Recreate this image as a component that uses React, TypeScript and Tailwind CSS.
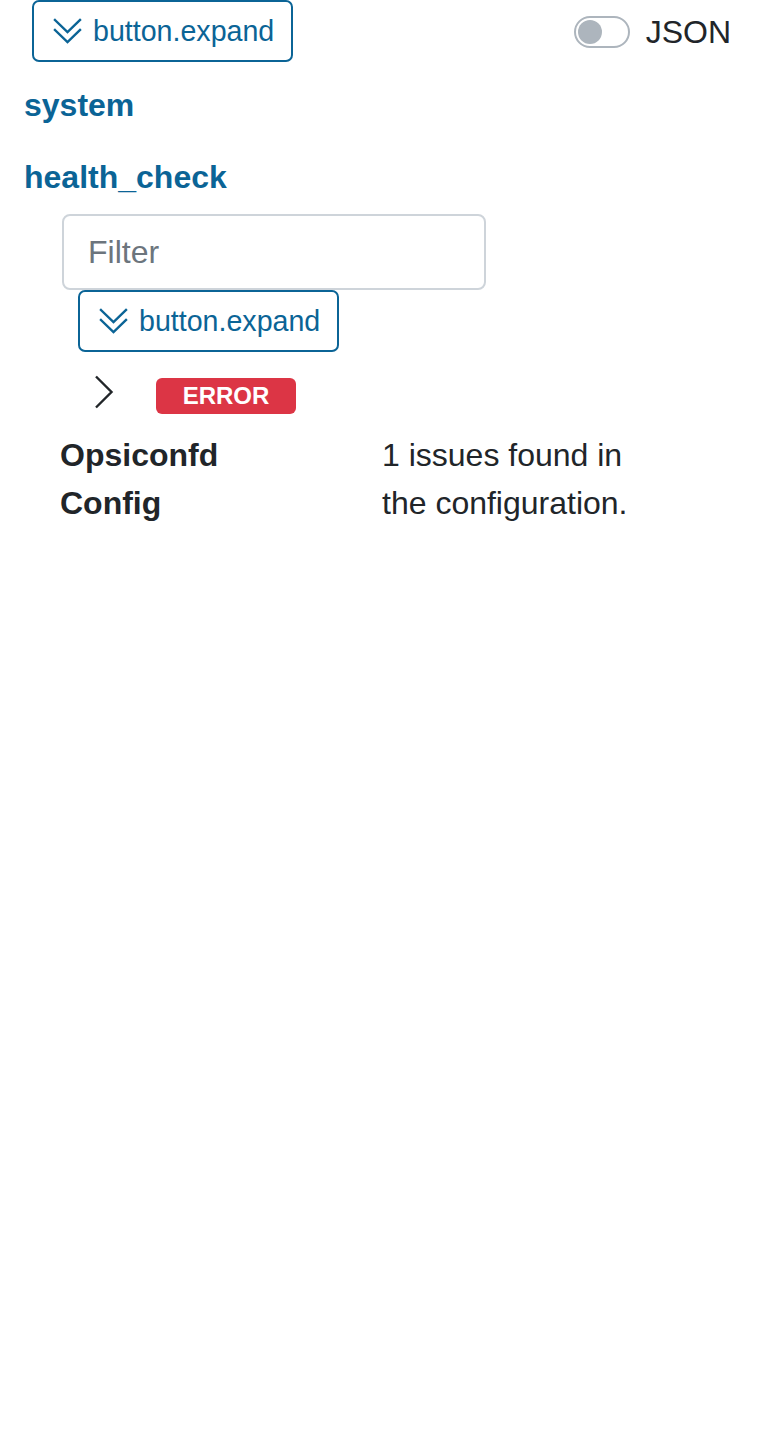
import React from "react";

const DoubleChevron = () => (
  <svg className="shrink-0" width="29" height="26" viewBox="0 0 29 26" fill="none" stroke="#0b6496" strokeWidth="2.4" strokeLinecap="square" strokeLinejoin="miter">
    <path d="M2 2 L14.5 14 L27 2" />
    <path d="M2 12 L14.5 24 L27 12" />
  </svg>
);

const ExpandButton = ({ className = "" }: { className?: string }) => (
  <button
    className={`flex items-center h-[62px] w-[261px] pl-[19px] pr-[12px] gap-[11px] border-2 border-[#0b6496] rounded-[7px] bg-white text-[#0b6496] text-[28.6px] leading-[42px] whitespace-nowrap ${className}`}
  >
    <DoubleChevron />
    <span>button.expand</span>
  </button>
);

export default function App() {
  return (
    <div
      className="w-[764px] h-[1434px] bg-white text-[#212529]"
      style={{ fontFamily: '"Liberation Sans", Arial, sans-serif' }}
    >
      <div className="flex items-center justify-between h-[62px] pl-[32px] pr-[33px]">
        <ExpandButton />
        <div className="flex items-center gap-[16px] pt-[2px]">
          <div className="w-[56px] h-[32px] rounded-full border-2 border-[#adb5bd] flex items-center pl-[2px]">
            <div className="w-[24px] h-[24px] rounded-full bg-[#adb5bd]" />
          </div>
          <span className="text-[32px] leading-[48px] text-[#212529]">JSON</span>
        </div>
      </div>

      <div className="pl-[24px] mt-[19px] text-[32px] leading-[48px] font-bold text-[#0b6496]">system</div>
      <div className="pl-[24px] mt-[24px] text-[32px] leading-[48px] font-bold text-[#0b6496]">health_check</div>

      <div className="pl-[62px] mt-[13px]">
        <div className="w-[424px] h-[76px] border-2 border-[#ced4da] rounded-[8px] flex items-center pl-[24px] text-[32px] text-[#6c757d]">
          Filter
        </div>
      </div>

      <div className="pl-[78px]">
        <ExpandButton />
      </div>

      <div className="flex items-center h-[62px] pl-[94px] mt-[11px]">
        <svg className="mb-[4px]" width="20" height="34" viewBox="0 0 20 34" fill="none" stroke="#212529" strokeWidth="2.4">
          <path d="M2 1.5 L17.5 17 L2 32.5" />
        </svg>
        <div className="ml-[42px] h-[36px] w-[140px] rounded-[6px] bg-[#dc3545] text-white font-bold text-[24px] flex items-center justify-center mt-[4px]">
          ERROR
        </div>
      </div>

      <div className="flex pl-[60px] mt-[6px] text-[32px] leading-[48px]">
        <div className="w-[322px]">
          <div className="w-[200px] font-bold">Opsiconfd Config</div>
        </div>
        <div className="w-[270px]">1 issues found in the configuration.</div>
      </div>
    </div>
  );
}
